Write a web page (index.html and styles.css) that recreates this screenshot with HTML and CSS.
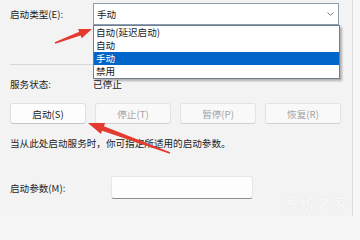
FILE: index.html
```html
<!DOCTYPE html>
<html lang="zh-CN">
<head>
<meta charset="utf-8">
<title>服务属性</title>
<link rel="stylesheet" href="styles.css">
</head>
<body>
<div class="window">
  <div class="panel">
    <div class="type-row">
      <span class="label">启动类型(E):</span>
      <div class="select">
        <span>手动</span>
        <svg class="chevron" width="7" height="4" viewBox="0 0 7 4"><path d="M0.5 0.5 L3.5 3.3 L6.5 0.5" fill="none" stroke="#707070" stroke-width="0.9"/></svg>
      </div>
    </div>
    <div class="sep"></div>
    <div class="status-row">
      <span class="label">服务状态:</span>
      <span class="value">已停止</span>
    </div>
    <div class="buttons">
      <button class="btn enabled">启动(S)</button>
      <button class="btn">停止(T)</button>
      <button class="btn">暂停(P)</button>
      <button class="btn">恢复(R)</button>
    </div>
    <p class="desc">当从此处启动服务时，你可指定所适用的启动参数。</p>
    <div class="param-row">
      <span class="label wide">启动参数(M):</span>
      <div class="input"></div>
    </div>
  </div>
  <ul class="dropdown">
    <li>自动(延迟启动)</li>
    <li>自动</li>
    <li class="selected">手动</li>
    <li>禁用</li>
  </ul>
  <svg class="arrows" width="360" height="216" viewBox="0 0 360 216">
    <polygon fill="#e43b30" points="54.7,42.3 79.2,31.7 78.1,28.9 92,29 81.7,38.3 80.6,35.5 55.3,43.7"/>
    <polygon fill="#e43b30" points="88,123 105.1,122.9 103.9,126.2 170.3,152.2 169.7,153.8 102.1,130.8 100.9,134.1"/>
  </svg>
  <div class="watermark">系统之家</div>
</div>
</body>
</html>
```
FILE: styles.css
```css
html, body {
  margin: 0;
  padding: 0;
}
body {
  background: #f7f7f7;
  font-family: "Noto Sans CJK SC", "Noto Sans", sans-serif;
  font-size: 9.6px;
  line-height: 14px;
  color: #1b1b1b;
}
.window {
  position: relative;
  width: 360px;
  height: 216px;
  overflow: hidden;
}
.panel {
  width: 353px;
  height: 216px;
  box-sizing: border-box;
  background: #f3f3f3;
  border-right: 1px solid #dedede;
  padding: 3px 0 0 10px;
}
.label {
  flex: none;
  width: 83px;
}
.label.wide {
  width: 101px;
}
.type-row {
  display: flex;
  align-items: center;
  height: 22px;
}
.select {
  width: 246px;
  height: 22px;
  box-sizing: border-box;
  border: 1px solid #8d9db0;
  background: #fff;
  display: flex;
  align-items: center;
  justify-content: space-between;
  padding: 0 4px 0 3px;
}
.sep {
  margin-top: 39px;
  width: 329px;
  height: 1px;
  background: #d8d8d8;
}
.status-row {
  display: flex;
  margin-top: 12px;
  height: 14px;
}
.value {
  color: #1b1b1b;
}
.buttons {
  display: flex;
  gap: 9px;
  margin-top: 12px;
}
.btn {
  width: 76px;
  height: 21px;
  box-sizing: border-box;
  border: 1px solid #e3e3e3;
  border-bottom-color: #d2d2d2;
  border-radius: 3px;
  background: #f9f9f9;
  color: #a3a3a3;
  font-family: inherit;
  font-size: 9.6px;
  padding: 0;
}
.btn.enabled {
  background: #fdfdfd;
  color: #1b1b1b;
  border-color: #e0e0e0;
  border-bottom-color: #c6c6c6;
}
.desc {
  margin: 12px 0 0;
  height: 14px;
}
.param-row {
  display: flex;
  align-items: center;
  margin-top: 26px;
}
.input {
  width: 142px;
  height: 23px;
  box-sizing: border-box;
  background: #fdfdfd;
  border: 1px solid #e6e6e6;
  border-bottom: 1px solid #8c8c8c;
  border-radius: 3px;
}
.dropdown {
  position: absolute;
  left: 93px;
  top: 25px;
  width: 247px;
  margin: 0;
  padding: 0;
  list-style: none;
  box-sizing: border-box;
  background: #fff;
  border: 1px solid #6f7f8f;
  box-shadow: 2px 2px 2px rgba(0, 0, 0, 0.28);
}
.dropdown li {
  height: 13px;
  line-height: 13px;
  padding-left: 2px;
  color: #1b1b1b;
}
.dropdown li.selected {
  background: #0064c8;
  color: #fff;
}
.arrows {
  position: absolute;
  left: 0;
  top: 0;
  pointer-events: none;
}
.watermark {
  position: absolute;
  right: 12px;
  bottom: 6px;
  font-size: 15px;
  font-weight: bold;
  letter-spacing: 1px;
  color: rgba(255, 255, 255, 0.8);
  text-shadow: 0 0 1px rgba(190, 190, 190, 0.45);
}
```
